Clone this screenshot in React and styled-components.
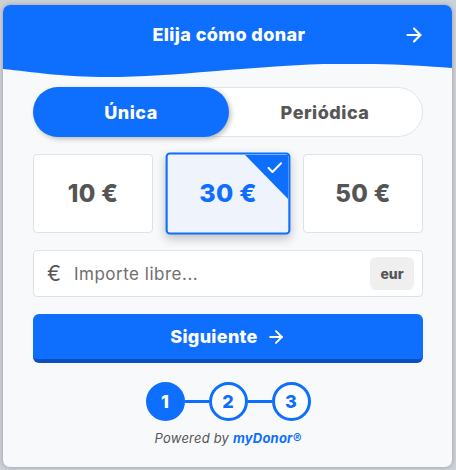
import React from 'react';
import styled, { createGlobalStyle, css } from 'styled-components';
import { ArrowRight, Check } from 'lucide-react';

const BLUE = '#0e6efd';

const GlobalStyle = createGlobalStyle`
    html, body {
        margin: 0;
        padding: 0;
        background: #ccd0d7;
    }
    body {
        font-family: Inter, "Noto Sans", sans-serif;
    }
`;

const Page = styled.div`
    padding: 5px 4px 3px 3px;
`;

const Card = styled.div`
    width: 449px;
    height: 462px;
    background: #f8f9fb;
    border-radius: 7px;
    overflow: hidden;
    box-shadow: 0 0 4px rgba(0, 0, 0, 0.25);
    display: flex;
    flex-direction: column;
`;

const Header = styled.div`
    height: 59px;
    background: ${BLUE};
    color: #fff;
    display: grid;
    grid-template-columns: 1fr auto 1fr;
    align-items: center;
    padding: 0 27px 0 30px;
`;

const Title = styled.div`
    grid-column: 2;
    font-size: 18px;
    font-weight: 800;
    letter-spacing: 0.4px;
`;

const HeaderArrow = styled.div`
    grid-column: 3;
    justify-self: end;
    display: flex;
`;

const Wave = styled.svg`
    display: block;
    width: 449px;
    height: 14px;
`;

const Body = styled.div`
    padding: 9px 29px 0 30px;
    display: flex;
    flex-direction: column;
    gap: 17px;
`;

const Toggle = styled.div`
    height: 50px;
    box-sizing: border-box;
    border-radius: 25px;
    background: #fff;
    border: 1px solid #e3e4e7;
    display: grid;
    grid-template-columns: 1fr 1fr;
`;

const ToggleOption = styled.div`
    margin: -1px;
    border-radius: 25px;
    display: flex;
    align-items: center;
    justify-content: center;
    font-size: 18px;
    font-weight: 800;
    letter-spacing: 0.5px;
    color: #565656;
    ${p => p.$active && css`
        background: ${BLUE};
        color: #fff;
        box-shadow: 2px 2px 5px rgba(0, 0, 0, 0.25);
    `}
`;

const Amounts = styled.div`
    display: grid;
    grid-template-columns: repeat(3, 1fr);
    gap: 15px;
`;

const Amount = styled.div`
    position: relative;
    height: 79px;
    box-sizing: border-box;
    background: #fff;
    border: 1px solid #e0e1e4;
    border-radius: 4px;
    display: flex;
    align-items: center;
    justify-content: center;
    font-size: 24px;
    font-weight: 800;
    letter-spacing: 0.3px;
    color: #555;
    overflow: hidden;
    ${p => p.$selected && css`
        background: #eff3fb;
        border: 2px solid ${BLUE};
        color: ${BLUE};
        transform: scale(1.04);
        box-shadow: 0 4px 9px rgba(0, 0, 0, 0.22);
    `}
`;

const Corner = styled.div`
    position: absolute;
    top: 0;
    right: 0;
    width: 42px;
    height: 43px;
    background: ${BLUE};
    clip-path: polygon(0 0, 100% 0, 100% 100%);
    color: #fff;
    display: flex;
    justify-content: flex-end;
    padding: 4px 4px 0 0;
    box-sizing: border-box;
`;

const InputRow = styled.div`
    height: 47px;
    box-sizing: border-box;
    background: #fff;
    border: 1px solid #dfe0e3;
    border-radius: 4px;
    display: flex;
    align-items: center;
    padding: 0 8px 0 13px;
    gap: 13px;
`;

const Euro = styled.span`
    font-size: 21px;
    color: #555;
`;

const Placeholder = styled.span`
    flex: 1;
    font-size: 17px;
    letter-spacing: 0.5px;
    color: #6e6e6e;
`;

const Badge = styled.span`
    width: 44px;
    height: 33px;
    border-radius: 6px;
    background: #efefef;
    display: flex;
    align-items: center;
    justify-content: center;
    font-size: 14px;
    font-weight: 800;
    color: #555;
`;

const NextButton = styled.button`
    height: 49px;
    border: none;
    border-bottom: 4px solid #0a4fbd;
    border-radius: 6px;
    background: ${BLUE};
    color: #fff;
    font-family: inherit;
    font-size: 18px;
    font-weight: 800;
    letter-spacing: 0.3px;
    display: flex;
    align-items: center;
    justify-content: center;
    gap: 8px;
    padding: 0;
`;

const Steps = styled.div`
    margin-top: 2px;
    display: flex;
    align-items: center;
    justify-content: center;
`;

const Step = styled.div`
    width: 39px;
    height: 39px;
    box-sizing: border-box;
    border-radius: 50%;
    border: 3px solid ${BLUE};
    background: ${p => (p.$active ? BLUE : '#fff')};
    color: ${p => (p.$active ? '#fff' : BLUE)};
    display: flex;
    align-items: center;
    justify-content: center;
    font-size: 18px;
    font-weight: 800;
`;

const Line = styled.div`
    width: 24px;
    height: 3px;
    background: ${BLUE};
`;

const Powered = styled.div`
    margin-top: -8px;
    text-align: center;
    font-size: 13px;
    font-style: italic;
    letter-spacing: 0.2px;
    color: #555;
`;

const Brand = styled.span`
    color: ${BLUE};
    font-weight: 700;
`;

const amounts = [10, 30, 50];

export default function App() {
    return (
        <Page>
            <GlobalStyle />
            <Card>
                <Header>
                    <Title>Elija cómo donar</Title>
                    <HeaderArrow>
                        <ArrowRight size={22} strokeWidth={2.4} />
                    </HeaderArrow>
                </Header>
                <Wave viewBox="0 0 449 14" preserveAspectRatio="none">
                    <path
                        d="M0 0 H449 V4 C410 1 370 -1 320 0 C250 2 170 13 105 13 C60 13 30 8 0 5 Z"
                        fill={BLUE}
                    />
                </Wave>
                <Body>
                    <Toggle>
                        <ToggleOption $active>Única</ToggleOption>
                        <ToggleOption>Periódica</ToggleOption>
                    </Toggle>
                    <Amounts>
                        {amounts.map(a => (
                            <Amount key={a} $selected={a === 30}>
                                {a} €
                                {a === 30 && (
                                    <Corner>
                                        <Check size={18} strokeWidth={2.6} />
                                    </Corner>
                                )}
                            </Amount>
                        ))}
                    </Amounts>
                    <InputRow>
                        <Euro>€</Euro>
                        <Placeholder>Importe libre...</Placeholder>
                        <Badge>eur</Badge>
                    </InputRow>
                    <NextButton>
                        Siguiente
                        <ArrowRight size={20} strokeWidth={2.4} />
                    </NextButton>
                    <Steps>
                        <Step $active>1</Step>
                        <Line />
                        <Step>2</Step>
                        <Line />
                        <Step>3</Step>
                    </Steps>
                    <Powered>
                        Powered by <Brand>myDonor®</Brand>
                    </Powered>
                </Body>
            </Card>
        </Page>
    );
}
